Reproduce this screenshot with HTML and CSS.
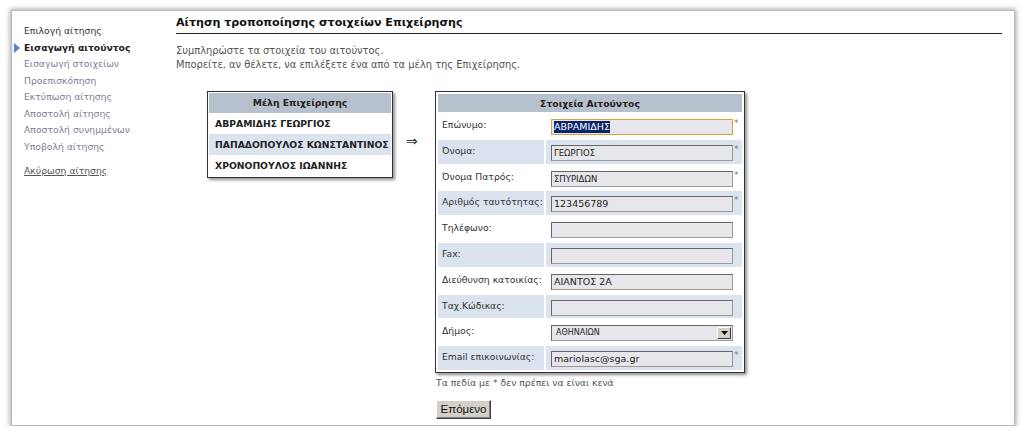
FILE: index.html
```html
<!DOCTYPE html>
<html lang="el">
<head>
<meta charset="utf-8">
<title>Αίτηση τροποποίησης στοιχείων Επιχείρησης</title>
<link rel="stylesheet" href="styles.css">
</head>
<body>
<div class="frame">
  <nav class="sidebar">
    <div class="nav-item done">Επιλογή αίτησης</div>
    <div class="nav-item current">Εισαγωγή αιτούντος</div>
    <div class="nav-item">Εισαγωγή στοιχείων</div>
    <div class="nav-item">Προεπισκόπηση</div>
    <div class="nav-item">Εκτύπωση αίτησης</div>
    <div class="nav-item">Αποστολή αίτησης</div>
    <div class="nav-item">Αποστολή συνημμένων</div>
    <div class="nav-item">Υποβολή αίτησης</div>
    <a class="nav-item cancel" href="#">Ακύρωση αίτησης</a>
  </nav>
  <main class="main">
    <h1 class="title">Αίτηση τροποποίησης στοιχείων Επιχείρησης</h1>
    <p class="intro">Συμπληρώστε τα στοιχεία του αιτούντος.<br>Μπορείτε, αν θέλετε, να επιλέξετε ένα από τα μέλη της Επιχείρησης.</p>
    <div class="work">
      <div class="members">
        <div class="box-head">Μέλη Επιχείρησης</div>
        <div class="member">ΑΒΡΑΜΙΔΗΣ ΓΕΩΡΓΙΟΣ</div>
        <div class="member alt">ΠΑΠΑΔΟΠΟΥΛΟΣ ΚΩΝΣΤΑΝΤΙΝΟΣ</div>
        <div class="member">ΧΡΟΝΟΠΟΥΛΟΣ ΙΩΑΝΝΗΣ</div>
      </div>
      <div class="arrow">⇒</div>
      <div class="form-col">
        <div class="form-box">
          <table class="form-table">
            <colgroup><col class="c-lbl"><col></colgroup>
            <tr><th colspan="2" class="form-head">Στοιχεία Αιτούντος</th></tr>
            <tr><td class="lbl">Επώνυμο:</td><td class="val"><div class="field focus"><span class="sel">ΑΒΡΑΜΙΔΗΣ</span></div><span class="req">*</span></td></tr>
            <tr class="alt"><td class="lbl">Όνομα:</td><td class="val"><div class="field caps">ΓΕΩΡΓΙΟΣ</div><span class="req">*</span></td></tr>
            <tr><td class="lbl">Όνομα Πατρός:</td><td class="val"><div class="field caps">ΣΠΥΡΙΔΩΝ</div><span class="req">*</span></td></tr>
            <tr class="alt"><td class="lbl">Αριθμός ταυτότητας:</td><td class="val"><div class="field">123456789</div><span class="req">*</span></td></tr>
            <tr><td class="lbl">Τηλέφωνο:</td><td class="val"><div class="field"></div></td></tr>
            <tr class="alt"><td class="lbl">Fax:</td><td class="val"><div class="field"></div></td></tr>
            <tr><td class="lbl">Διεύθυνση κατοικίας:</td><td class="val"><div class="field">ΑΙΑΝΤΟΣ 2Α</div></td></tr>
            <tr class="alt"><td class="lbl">Ταχ.Κώδικας:</td><td class="val"><div class="field"></div></td></tr>
            <tr><td class="lbl">Δήμος:</td><td class="val"><div class="field select"><span class="sel-text">ΑΘΗΝΑΙΩΝ</span><span class="drop"><svg width="7" height="4" viewBox="0 0 7 4"><path d="M0 0h7L3.5 4z" fill="#000"/></svg></span></div></td></tr>
            <tr class="alt"><td class="lbl">Email επικοινωνίας:</td><td class="val"><div class="field">mariolasc@sga.gr</div><span class="req">*</span></td></tr>
          </table>
        </div>
        <p class="note">Τα πεδία με * δεν πρέπει να είναι κενά</p>
        <button class="next" type="button">Επόμενο</button>
      </div>
    </div>
  </main>
</div>
</body>
</html>
```

FILE: styles.css
```css
* { box-sizing: border-box; }
html, body { margin: 0; padding: 0; background: #fff; }
body {
  font-family: "DejaVu Sans", Verdana, sans-serif;
  font-size: 9.25px;
  color: #333;
}
.frame {
  margin: 10px 0 0 11px;
  width: 1004px;
  height: 416px;
  background: #fff;
  border: 1px solid #b8b8b8;
  box-shadow: 0 0 5px 1px rgba(0,0,0,0.35);
  display: flex;
  padding: 0 12px;
}
.sidebar {
  width: 152px;
  flex: none;
  padding-top: 12px;
  display: flex;
  flex-direction: column;
  align-items: flex-start;
}
.nav-item {
  line-height: 16.5px;
  color: #847c93;
  font-size: 9.25px;
}
.nav-item.done { color: #333; }
.nav-item.current {
  color: #222;
  font-weight: bold;
  display: flex;
  align-items: center;
}
.nav-item.current::before {
  content: "";
  width: 0; height: 0;
  border-left: 6px solid #4f82c9;
  border-top: 5px solid transparent;
  border-bottom: 5px solid transparent;
  margin-left: -10px;
  margin-right: 4px;
}
.nav-item.cancel {
  margin-top: 8px;
  color: #555;
  text-decoration: underline;
}
.main {
  flex: 1;
  display: flex;
  flex-direction: column;
}
.title {
  margin: 3px 0 0;
  font-size: 11.1px;
  line-height: 17px;
  color: #111;
  padding-bottom: 2px;
  border-bottom: 1px solid #222;
}
.intro {
  margin: 10px 0 0;
  color: #555;
  line-height: 14px;
  font-size: 9.9px;
}
.work {
  display: flex;
  align-items: flex-start;
  margin-top: 19px;
  padding-left: 31px;
}
.members {
  width: 186px;
  flex: none;
  border: 1px solid #333;
  padding: 1px;
  box-shadow: 2px 2px 3px rgba(0,0,0,0.45);
  background: #fff;
}
.box-head {
  background: #b6c1cd;
  text-align: center;
  font-weight: bold;
  height: 20px;
  line-height: 20px;
  color: #222;
}
.member {
  height: 21px;
  line-height: 21px;
  padding-left: 6px;
  font-weight: bold;
  color: #222;
  white-space: nowrap;
}
.member.alt { background: #dbe4ee; }
.arrow {
  margin: 42px 0 0 13px;
  width: 29px;
  flex: none;
  font-size: 14px;
  color: #333;
}
.form-col {
  display: flex;
  flex-direction: column;
  align-items: flex-start;
}
.form-box {
  width: 310px;
  border: 1px solid #333;
  box-shadow: 2px 2px 3px rgba(0,0,0,0.45);
  background: #fff;
}
.form-table {
  width: 100%;
  border-spacing: 2px;
  table-layout: fixed;
}
.c-lbl { width: 106px; }
.form-table td, .form-table th { padding: 0; }
.form-head {
  background: #b6c1cd;
  height: 18px;
  font-weight: bold;
  text-align: center;
  color: #222;
}
.form-table tr.alt td { background: #dbe4ee; }
.lbl {
  height: 23.8px;
  padding-left: 4px !important;
  vertical-align: top;
  padding-top: 5px !important;
  color: #333;
  white-space: nowrap;
}
.val {
  vertical-align: top;
  padding-top: 5px !important;
  padding-left: 5px !important;
  position: relative;
}
.field {
  width: 182px;
  height: 16px;
  background: #e7e7eb;
  border: 1px solid #666;
  border-right-color: #999;
  border-bottom-color: #999;
  font-size: 9.5px;
  line-height: 14px;
  padding-left: 2px;
  color: #222;
  white-space: nowrap;
  display: flex;
  align-items: center;
}
.field.caps { font-size: 8.5px; }
.field.focus { border: 1px solid #d9a33a; }
.sel { background: #0a246a; color: #fff; font-size: 9.5px; line-height: 12px; }
.field.select {
  justify-content: space-between;
  padding-right: 1px;
  font-size: 8px;
  padding-left: 4px;
}
.drop {
  width: 14px;
  height: 12px;
  background: #d4d0c8;
  border: 1px solid;
  border-color: #fff #404040 #404040 #fff;
  display: flex;
  align-items: center;
  justify-content: center;
}
.req {
  position: absolute;
  left: 188px;
  top: 4px;
  font-size: 9px;
  color: #777;
}
.note {
  margin: 3px 0 0 1px;
  color: #555;
  line-height: 14px;
}
.next {
  margin: 10px 0 0 1px;
  width: 55px;
  height: 19px;
  background: #d4d0c8;
  border: 1px solid;
  border-color: #fff #404040 #404040 #fff;
  box-shadow: inset -1px -1px 0 #808080;
  font-family: "Liberation Sans", Arial, sans-serif;
  font-size: 11.5px;
  color: #111;
  padding: 0;
}
```
